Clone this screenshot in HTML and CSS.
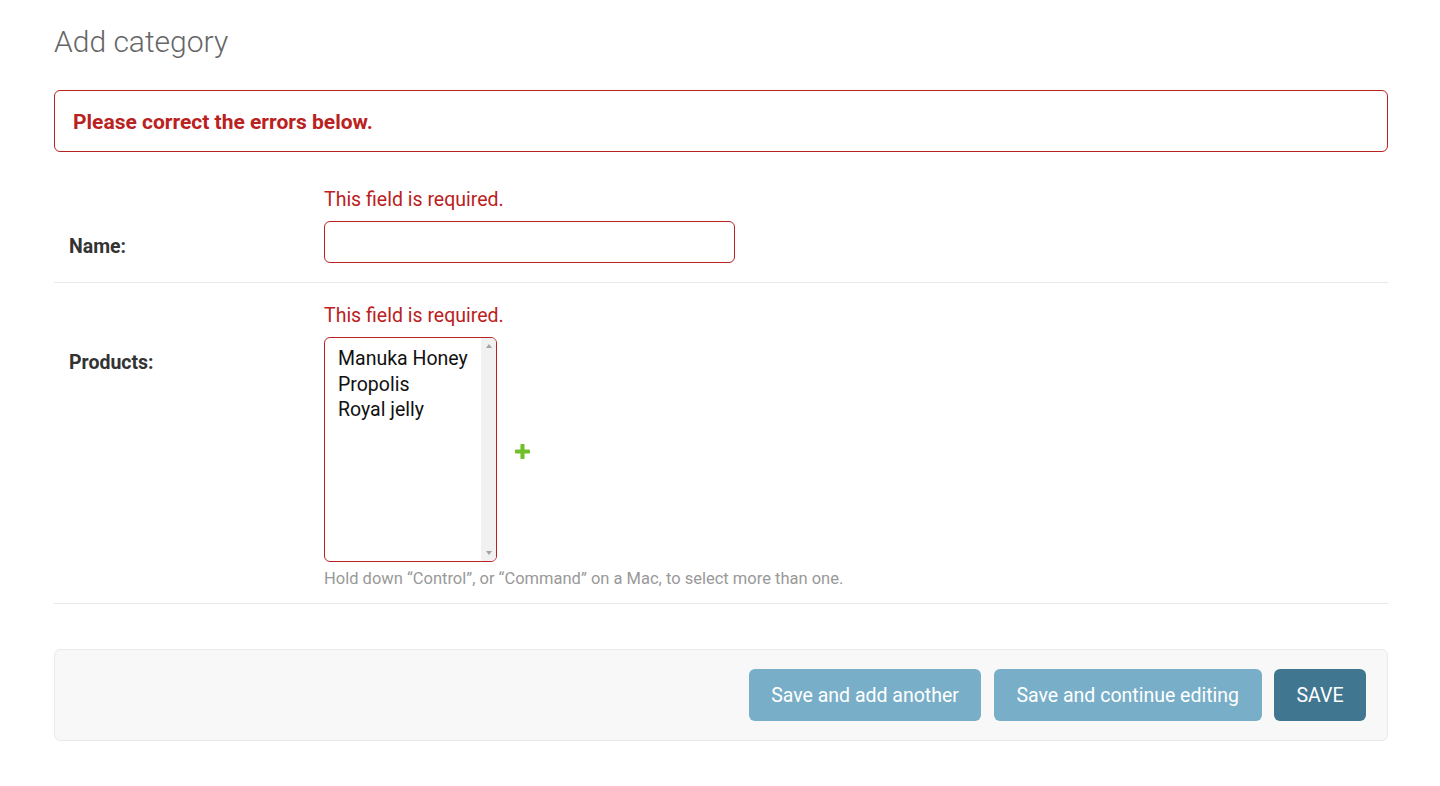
FILE: index.html
```html
<!DOCTYPE html>
<html lang="en">
<head>
<meta charset="utf-8">
<title>Add category</title>
<link rel="stylesheet" href="styles.css">
</head>
<body>
<div class="content">
  <h1 class="title">Add category</h1>
  <form class="change-form">
    <p class="errornote">Please correct the errors below.</p>
    <fieldset class="module">
      <div class="form-row form-row-first">
        <ul class="errorlist"><li>This field is required.</li></ul>
        <div class="flex-container">
          <label class="field-label" for="id_name">Name:</label>
          <input class="text-input" type="text" id="id_name">
        </div>
      </div>
      <div class="form-row form-row-last">
        <ul class="errorlist"><li>This field is required.</li></ul>
        <div class="flex-container">
          <label class="field-label">Products:</label>
          <div class="related-widget-wrapper">
            <div class="multi-select">
              <ul class="options">
                <li>Manuka Honey</li>
                <li>Propolis</li>
                <li>Royal jelly</li>
              </ul>
              <div class="scrollbar"><span class="arrow arrow-up"></span><span class="arrow arrow-down"></span></div>
            </div>
            <a class="add-related" href="#" title="Add another product"><svg class="add-icon" viewBox="192 192 1408 1408" width="15" height="15"><path fill="#70bf2b" d="M1600 796v192q0 40-28 68t-68 28h-416v416q0 40-28 68t-68 28h-192q-40 0-68-28t-28-68v-416h-416q-40 0-68-28t-28-68v-192q0-40 28-68t68-28h416v-416q0-40 28-68t68-28h192q40 0 68 28t28 68v416h416q40 0 68 28t28 68z"/></svg></a>
          </div>
        </div>
        <div class="help">Hold down “Control”, or “Command” on a Mac, to select more than one.</div>
      </div>
    </fieldset>
    <div class="submit-row">
      <button type="button" class="btn">Save and add another</button>
      <button type="button" class="btn">Save and continue editing</button>
      <button type="button" class="btn btn-default">SAVE</button>
    </div>
  </form>
</div>
</body>
</html>
```
FILE: styles.css
```css
html, body {
  margin: 0;
  padding: 0;
  background: #fff;
}

body {
  font-family: Roboto, "Liberation Sans", Arial, sans-serif;
  color: #333;
}

.content {
  padding: 0 52px 0 54px;
}

.title {
  margin: 0 0 31px;
  padding-top: 24px;
  font-size: 30px;
  line-height: 35px;
  font-weight: 300;
  color: #666;
}

.errornote {
  margin: 0 0 15px;
  padding: 16px 18px 14px;
  border: 1px solid #ba2121;
  border-radius: 6px;
  color: #ba2121;
  font-size: 21px;
  line-height: 30px;
  font-weight: 700;
}

.module {
  margin: 0;
  padding: 0;
  border: 0;
  min-width: 0;
}

.form-row {
  padding: 16px 15px 19px;
  border-bottom: 1px solid #e8e8e8;
}

.form-row-last {
  padding-bottom: 17px;
}

.errorlist {
  list-style: none;
  margin: 0 0 6px 255px;
  padding: 2px 0 0;
  font-size: 19.5px;
  line-height: 30px;
  color: #ba2121;
}

.flex-container {
  display: flex;
  align-items: flex-start;
}

.field-label {
  flex: none;
  width: 240px;
  padding: 12px 15px 0 0;
  font-size: 19.5px;
  line-height: 27px;
  font-weight: 700;
  color: #333;
}

.text-input {
  box-sizing: border-box;
  width: 411px;
  height: 42px;
  margin: 0;
  padding: 7px 9px;
  border: 1px solid #ba2121;
  border-radius: 6px;
  background: #fff;
  font-family: inherit;
  font-size: 19.5px;
  color: #333;
  outline: none;
}

.related-widget-wrapper {
  display: flex;
  align-items: center;
  gap: 18px;
}

.multi-select {
  box-sizing: border-box;
  display: flex;
  width: 173px;
  height: 225px;
  border: 1px solid #ba2121;
  border-radius: 6px;
  overflow: hidden;
  background: #fff;
}

.options {
  flex: 1;
  margin: 0;
  padding: 8px 13px 6px;
  list-style: none;
  font-size: 19.5px;
  line-height: 25.5px;
  color: #111;
  white-space: nowrap;
}

.scrollbar {
  flex: none;
  width: 17px;
  background: #f1f1f1;
  display: flex;
  flex-direction: column;
  justify-content: space-between;
  align-items: center;
  padding: 6px 0;
  box-sizing: border-box;
}

.arrow {
  width: 0;
  height: 0;
  border-left: 3.5px solid transparent;
  border-right: 3.5px solid transparent;
}

.arrow-up {
  border-bottom: 4px solid #a3a3a3;
}

.arrow-down {
  border-top: 4px solid #a3a3a3;
}

.add-related {
  display: flex;
  align-items: center;
  margin-top: 3px;
}

.add-icon {
  display: block;
}

.help {
  margin: 7px 0 0 255px;
  font-size: 16.5px;
  line-height: 19px;
  color: #999;
}

.form-row-last {
  padding-bottom: 15px;
}

.submit-row {
  margin-top: 45px;
  padding: 19px 21px;
  display: flex;
  justify-content: flex-end;
  gap: 12.5px;
  background: #f8f8f8;
  border: 1px solid #eaeaea;
  border-radius: 6px;
}

.btn {
  height: 52px;
  margin: 0;
  padding: 0 22.5px;
  border: 0;
  border-radius: 6px;
  background: #79aec8;
  color: #fff;
  font-family: inherit;
  font-size: 19.5px;
  font-weight: 400;
  cursor: pointer;
}

.btn-default {
  background: #417690;
}
```
